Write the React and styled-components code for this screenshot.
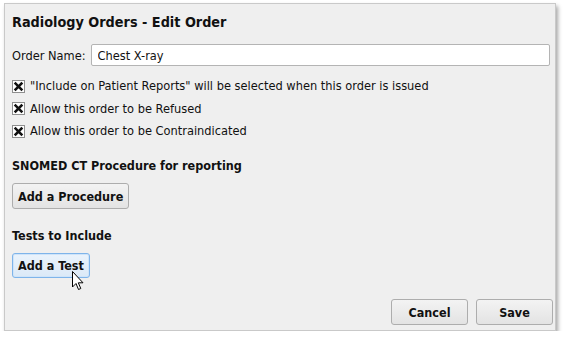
import styled, { createGlobalStyle } from 'styled-components';

const GlobalStyle = createGlobalStyle`
  body {
    margin: 0;
    background: #ffffff;
    font-family: "DejaVu Sans Condensed", "DejaVu Sans", sans-serif;
    font-size: 12.7px;
    color: #111;
  }
`;

function CheckMark() {
  return (
    <svg width="13" height="13" viewBox="0 0 13 13">
      <rect x="0.5" y="0.5" width="12" height="12" fill="#fff" stroke="#8f8f8f" />
      <path d="M3.6 3.6 L9.4 9.4 M9.4 3.6 L3.6 9.4" stroke="#111" strokeWidth="2.6" strokeLinecap="square" />
    </svg>
  );
}

function Cursor() {
  return (
    <svg width="13" height="21" viewBox="0 0 13 21">
      <path d="M0.5 0.5 L0.5 16 L4 12.5 L6.5 18.5 L8.8 17.5 L6.3 11.8 L11 11.8 Z" fill="#fff" stroke="#000" strokeWidth="1" strokeLinejoin="round" />
    </svg>
  );
}

export default function App() {
  return (
    <>
      <GlobalStyle />
      <Page>
        <Panel>
          <Title>Radiology Orders - Edit Order</Title>
          <NameRow>
            <label>Order Name:</label>
            <NameInput defaultValue="Chest X-ray" />
          </NameRow>
          <Checks>
            <CheckRow><CheckMark />"Include on Patient Reports" will be selected when this order is issued</CheckRow>
            <CheckRow><CheckMark />Allow this order to be Refused</CheckRow>
            <CheckRow><CheckMark />Allow this order to be Contraindicated</CheckRow>
          </Checks>
          <Section>
            <SectionTitle>SNOMED CT Procedure for reporting</SectionTitle>
            <Row><Button $tall>Add a Procedure</Button></Row>
          </Section>
          <Section>
            <SectionTitle>Tests to Include</SectionTitle>
            <Row>
              <ButtonWrap>
                <Button $focused>Add a Test</Button>
                <CursorSpot><Cursor /></CursorSpot>
              </ButtonWrap>
            </Row>
          </Section>
          <Footer>
            <Button $wide $tall>Cancel</Button>
            <Button $wide $tall>Save</Button>
          </Footer>
        </Panel>
      </Page>
    </>
  );
}

const Page = styled.div`
  padding: 3px 0 0 4px;
`;

const Panel = styled.div`
  width: 552px;
  height: 328px;
  box-sizing: border-box;
  background: #efefef;
  border: 1px solid #c9c9c9;
  box-shadow: 2px 3px 4px rgba(0, 0, 0, 0.35);
  padding: 8px 7px 0 7px;
  display: flex;
  flex-direction: column;
`;

const Title = styled.div`
  font-size: 14.3px;
  font-weight: bold;
  line-height: 20px;
  margin-bottom: 12px;
`;

const NameRow = styled.div`
  display: flex;
  align-items: center;
  gap: 5px;
`;

const NameInput = styled.input`
  flex: 1;
  height: 22px;
  box-sizing: border-box;
  border: 1px solid #b4b4b4;
  border-radius: 2px;
  background: #fff;
  padding: 0 6px;
  font-family: inherit;
  font-size: 12.7px;
  color: #111;
  margin-right: -2px;
  outline: none;
`;

const Checks = styled.div`
  display: flex;
  flex-direction: column;
  gap: 6.5px;
  margin-top: 12px;
`;

const CheckRow = styled.div`
  display: flex;
  align-items: center;
  gap: 5px;
  line-height: 16px;
`;

const Section = styled.div`
  margin-top: 19px;
  display: flex;
  flex-direction: column;
  gap: 9px;
`;

const SectionTitle = styled.div`
  font-weight: bold;
  font-size: 12.5px;
  line-height: 16px;
`;

const Row = styled.div`
  display: flex;
`;

const ButtonWrap = styled.div`
  position: relative;
`;

const CursorSpot = styled.div`
  position: absolute;
  left: 60px;
  top: 18px;
`;

const Button = styled.button`
  height: ${p => (p.$tall ? '26px' : '25px')};
  min-width: ${p => (p.$wide ? '77px' : 'auto')};
  padding: 0 5px;
  box-sizing: border-box;
  font-family: inherit;
  font-size: 12.5px;
  font-weight: bold;
  color: #111;
  border-radius: 3px;
  border: 1px solid ${p => (p.$focused ? '#7eb4ea' : '#adadad')};
  background: ${p => (p.$focused ? 'linear-gradient(#eaf3fc, #dbe9f7)' : 'linear-gradient(#f3f3f3, #e3e3e3)')};
  box-shadow: ${p => (p.$focused ? 'inset 0 0 0 1px #cfe4f9' : 'none')};
`;

const Footer = styled.div`
  margin-top: auto;
  margin-bottom: 5px;
  display: flex;
  justify-content: flex-end;
  gap: 8px;
  margin-right: -5px;
`;
